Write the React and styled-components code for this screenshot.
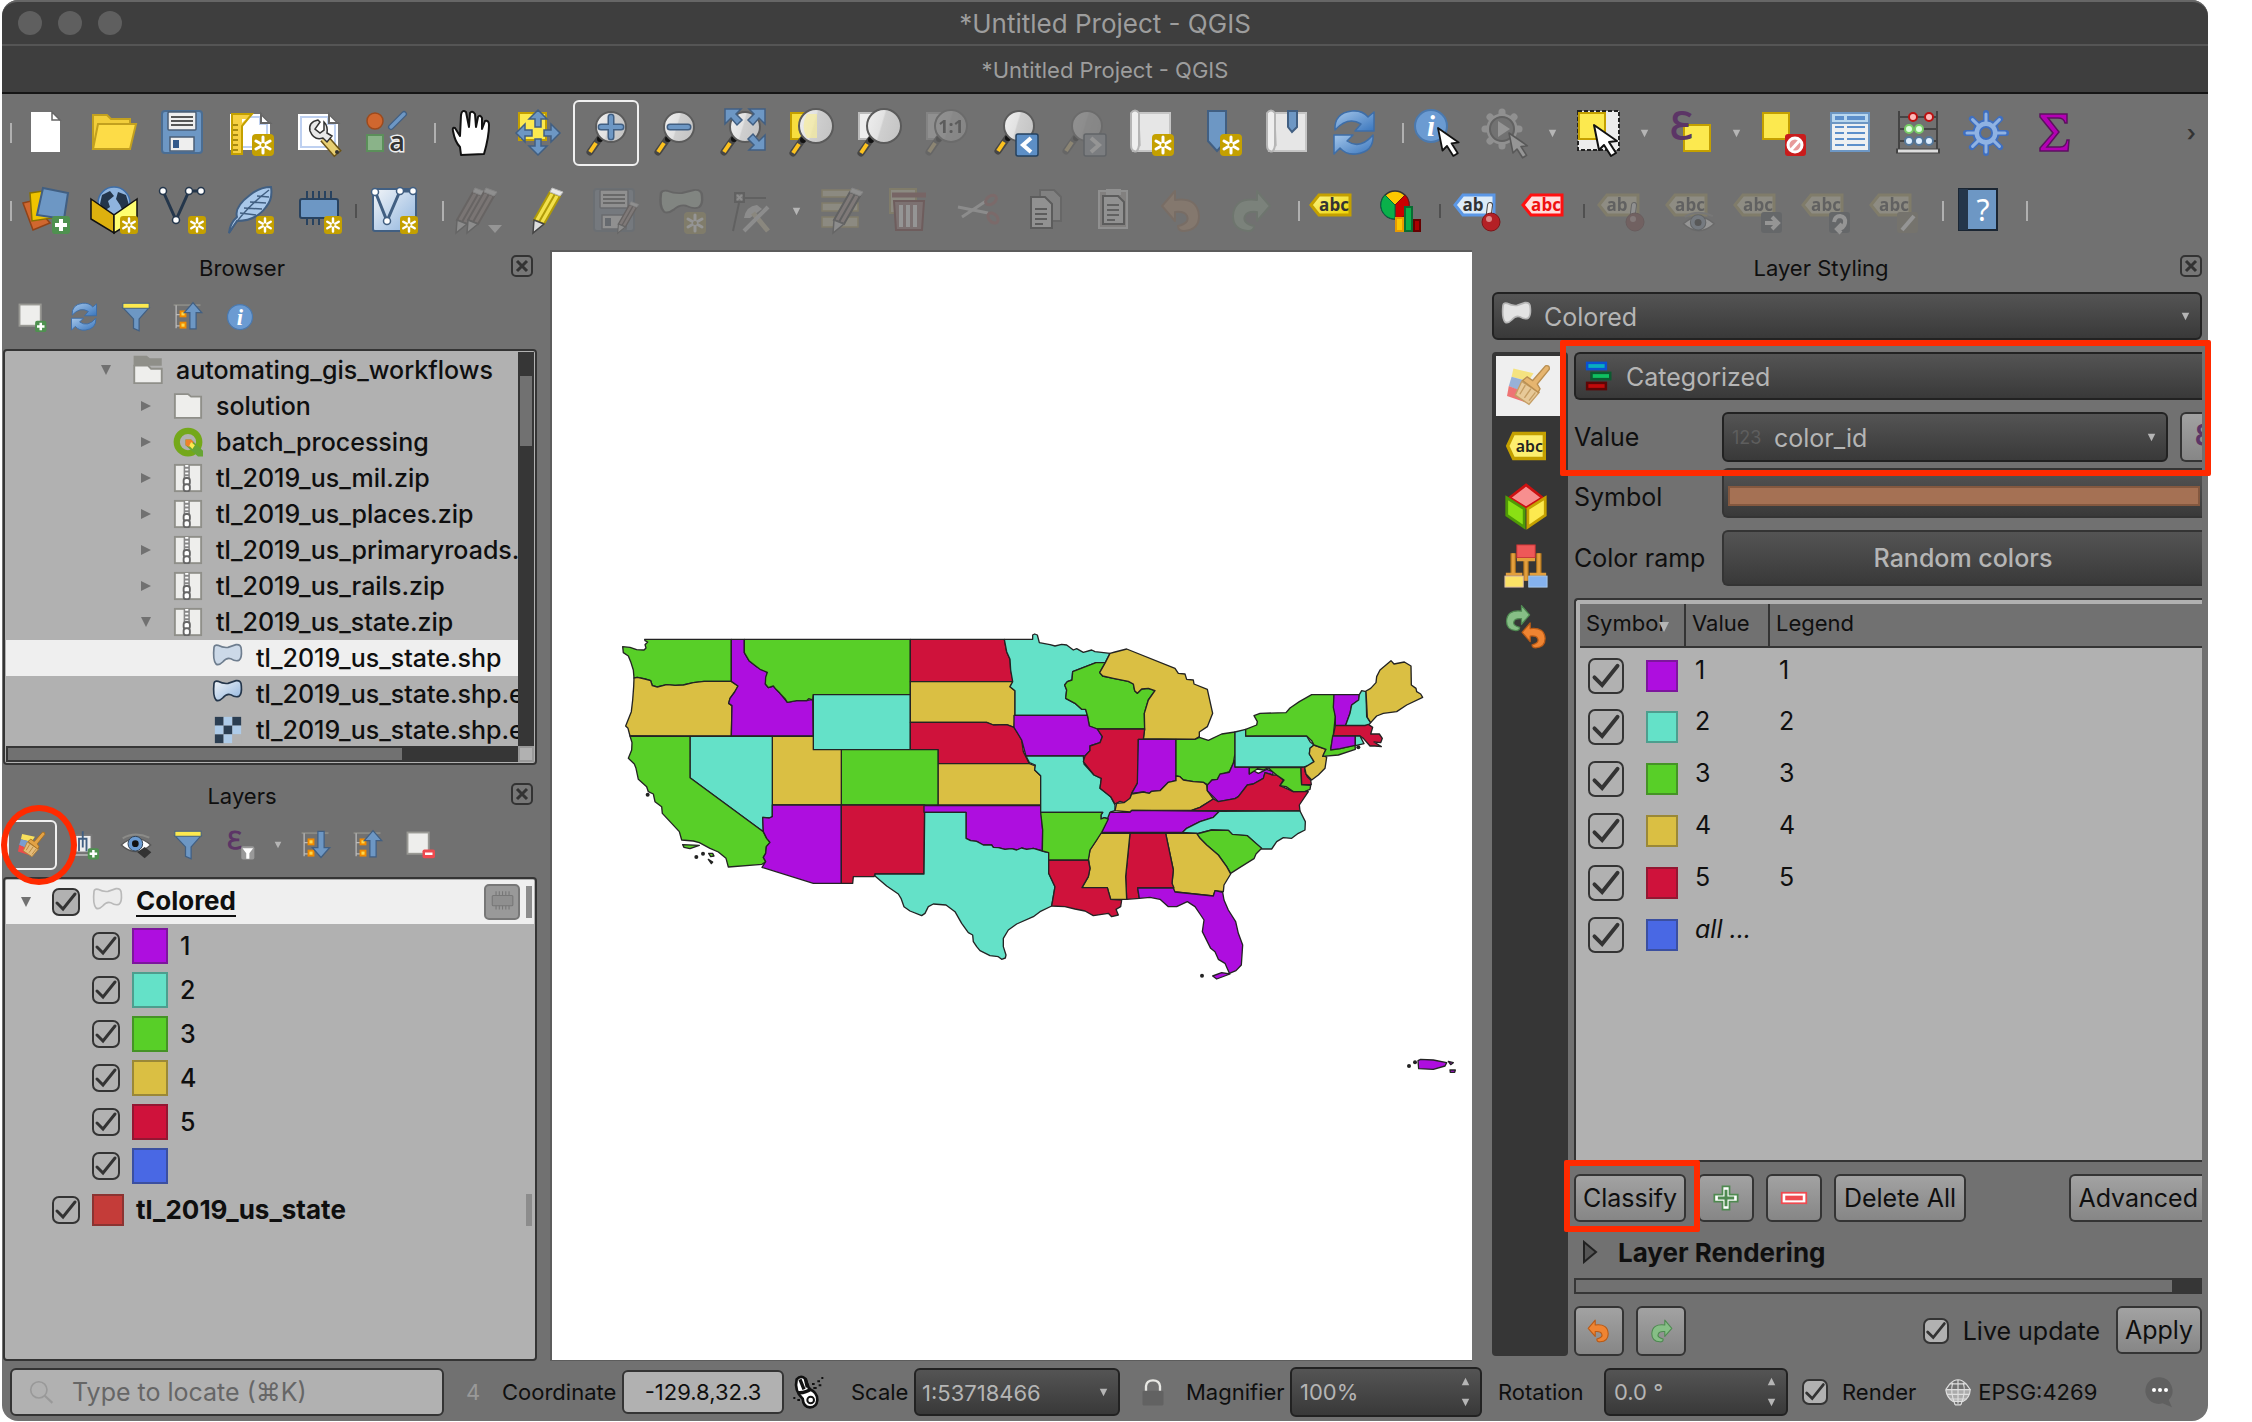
import React from "react";
import styled, { createGlobalStyle, css } from "styled-components";

const Global = createGlobalStyle`
  * { box-sizing: border-box; }
  body { margin: 0; background: #fff; }
  body, button, input, select { font-family: Inter, "Liberation Sans", sans-serif; color: #0f0f0f; }
  button, input, select { margin: 0; padding: 0; font-size: inherit; }
`;

const P = "#ae0edf", T = "#64e1c8", G = "#58cf28", Y = "#dabf43", R = "#cf123b", B = "#4968e4";
const BLUE = "#6d97c4", NAVY = "#415f82", GOLD = "#c4a000", YEL = "#fce94f";

/* ---------- icon parts ---------- */
const Star = ({ x = 26, y = 25, s = 22 }) => (
  <g transform={`translate(${x} ${y}) scale(${s / 22})`}>
    <rect width="22" height="22" rx="4" fill={GOLD} />
    <path d="M11 3V19M4 7L18 15M18 7L4 15" stroke="#fff" strokeWidth="3" strokeLinecap="round" />
    <circle cx="11" cy="11" r="2" fill={GOLD} />
  </g>
);
const Glass = ({ cx = 29, cy = 18, r = 15 }) => (
  <g>
    <path d={`M${cx - r + 4} ${cy + r - 4}L${cx - r - 6} ${cy + r + 10}`} stroke="#464646" strokeWidth="7" strokeLinecap="round" />
    <path d={`M${cx - r} ${cy + r + 1}L${cx - r - 6} ${cy + r + 10}`} stroke="#fcc21f" strokeWidth="4" />
    <circle cx={cx - r + 4} cy={cy + r - 3} r="3" fill="#111" />
    <circle cx={cx} cy={cy} r={r} fill="url(#lens)" stroke="#5b5b5b" strokeWidth="2" />
  </g>
);
const Cursor = ({ x, y, k = 1 }) => (
  <path transform={`translate(${x} ${y}) scale(${k})`} d="M0 0L5 25L10 20L17 31L22 28L15 17L23 16Z" fill="#fff" stroke="#111" strokeWidth="2" strokeLinejoin="round" />
);
const Sheet = () => (
  <g>
    <path d="M4 5H36L44 13V41H4Z" fill="#fff" />
    <path d="M7 8H34V15H41V38H7Z" fill="none" stroke="#bed0f0" strokeWidth="2" />
    <path d="M35 5V14H44Z" fill="#fff" stroke="#666" strokeWidth="2" />
  </g>
);
const Scroll = () => (
  <g>
    <path d="M12 4H44V42H8L14 36Z" fill="#e6e6e6" stroke="#c5c5c5" strokeWidth="2" />
    <path d="M5 4Q9 -1 13 4V36Q12 44 8 42Q5 41 5 36Z" fill="#eee" stroke="#b5b5b5" strokeWidth="2" />
  </g>
);
const Pencil = ({ dx = 0, fill = "#f2e14c", edge = "#b09b08" }) => (
  <g transform={`translate(${dx} 0)`}>
    <path d="M28 5L38 9L22 37L12 33Z" fill={fill} stroke={edge} strokeWidth="2" />
    <path d="M33 7L17 35" stroke={edge} strokeWidth="2" />
    <path d="M28 5L30 1L41 5L38 9Z" fill="#e8e8e8" stroke="#bbb" strokeWidth="1" />
    <path d="M12 33L22 37L11 46Z" fill="#ddd" stroke="#444" strokeWidth="1.5" />
  </g>
);
const Tag = ({ fill = "url(#tagY)", edge = GOLD, ink = "#333", t = "abc" }) => (
  <g>
    <path d="M1 18L9 8H40V28H9Z" fill={fill} stroke={edge} strokeWidth="3" />
    <text x={t === "abc" ? 24 : 19} y="24" fontFamily="Open Sans, sans-serif" fontSize="17" fontWeight="700" fill={ink} textAnchor="middle">{t}</text>
  </g>
);
const Pin = () => (
  <g>
    <path d="M36 18L34 34" stroke="#444" strokeWidth="6" strokeLinecap="round" />
    <path d="M36 18L34 34" stroke="#eee" strokeWidth="4" strokeLinecap="round" />
    <circle cx="37" cy="35" r="9" fill="#b42025" stroke="#7d1518" strokeWidth="1" />
    <circle cx="35" cy="32" r="3" fill="#d88" />
  </g>
);
const Blob = ({ fill = "url(#blobF)", edge = "#24364b" }) => (
  <path d="M3 8Q4 4 9 5Q17 9 24 8Q30 6 36 4Q44 3 44 12Q45 23 41 27Q36 30 28 25Q22 23 16 30Q10 36 6 33Q1 27 3 8Z" fill={fill} stroke={edge} strokeWidth="2.5" />
);
const Undo = ({ fill = "#ef8432", edge = "#b95a16" }) => (
  <path d="M4 19L17 4V13Q40 10 41 29Q41 43 26 44Q20 44 20 39Q32 36 29 29Q27 24 17 25V34Z" fill={fill} stroke={edge} strokeWidth="2" strokeLinejoin="round" />
);
const Redo = () => <g transform="translate(48 0) scale(-1 1)"><Undo fill="#86bf86" edge="#4f8a52" /></g>;
const Eps = ({ x = 18, y = 32, s = 40 }) => (
  <text x={x} y={y} fontFamily="Liberation Serif, serif" fontSize={s} fontWeight="700" fill="#5c3566" textAnchor="middle">ℇ</text>
);
const Brush = () => (
  <g>
    <path d="M7 5L29 10L23 19L5 14Z" fill="#f8e05c" />
    <path d="M5 14L23 19L17 31L2 24Z" fill="#7a9dd0" />
    <path d="M2 24L17 30L21 42L0 35Z" fill="#ee4b4b" />
    <path d="M16 19L35 31L24 44L9 34Z" fill="#e5bd7c" stroke="#b78336" strokeWidth="1.5" />
    <path d="M14 33L20 23M19 37L26 27M24 40L31 31" stroke="#b78336" strokeWidth="1.5" />
    <path d="M17 18L22 14L28 18L42 2Q47 1 46 6L33 22L36 27L34 31Z" fill="#e3a245" stroke="#a86f1d" strokeWidth="1.5" />
  </g>
);
const TreeIcon = ({ up }) => (
  <g>
    <path d="M1 5H44" stroke="#8a8a85" strokeWidth="3" />
    <path d="M5 5V42M5 20H14M5 38H14" stroke="#bbb" strokeWidth="2" />
    <rect x="12" y="15" width="8" height="8" fill="#fcd94e" stroke="#f08a00" strokeWidth="3" />
    <rect x="12" y="33" width="8" height="8" fill="#fcd94e" stroke="#f08a00" strokeWidth="3" />
    <path d={up ? "M32 1L46 17H37V43H27V17H18Z" : "M32 44L46 28H37V2H27V28H18Z"} fill={BLUE} stroke={NAVY} strokeWidth="2" />
  </g>
);
const Funnel = () => (
  <g>
    <path d="M3 9L20 27V42L29 46V27L45 9Z" fill={BLUE} stroke={NAVY} strokeWidth="2" />
    <rect x="3" y="2" width="42" height="8" fill={YEL} stroke={NAVY} strokeWidth="1.5" />
  </g>
);
const Refresh = () => (
  <g fill="url(#swirl)" stroke="#3e6ea8" strokeWidth="1.5" strokeLinejoin="round">
    <path d="M5 21Q4 4 22 2Q32 1 38 8L44 3V22H25L31 15Q18 7 5 21Z" />
    <path d="M43 26Q44 43 26 45Q16 46 10 39L4 45V26H23L17 32Q30 41 43 26Z" />
  </g>
);
const Info = ({ cx = 24, cy = 24, r = 20 }) => (
  <g>
    <circle cx={cx} cy={cy} r={r} fill="#6b9bd2" stroke="#4b79ae" strokeWidth="2" />
    <text x={cx} y={cy + r * 0.6} fontFamily="Liberation Serif, serif" fontStyle="italic" fontWeight="700" fontSize={r * 1.8} fill="#fff" textAnchor="middle">i</text>
  </g>
);
const Gear = ({ n, ri, ro, fill, stroke, w, cx = 24, cy = 24 }) => (
  <g>
    {Array.from({ length: n }, (_, i) => {
      const a = (i * 2 * Math.PI) / n;
      return <line key={i} x1={cx + ri * Math.cos(a)} y1={cy + ri * Math.sin(a)} x2={cx + ro * Math.cos(a)} y2={cy + ro * Math.sin(a)} stroke={stroke} strokeWidth={w} strokeLinecap="round" />;
    })}
    <circle cx={cx} cy={cy} r={ri} fill={fill} stroke={stroke} strokeWidth="3" />
  </g>
);
const Chip = ({ fill = BLUE, edge = "#28425f" }) => (
  <g>
    <path d="M13 4V12M19 4V12M25 4V12M31 4V12M37 4V12M13 30V38M19 30V38M25 30V38M31 30V38M37 30V38" stroke={edge} strokeWidth="2" />
    <rect x="6" y="12" width="38" height="19" rx="2" fill={fill} stroke={edge} strokeWidth="2" />
  </g>
);
const PlusBadge = ({ x = 30, y = 29, s = 18 }) => (
  <g transform={`translate(${x} ${y}) scale(${s / 18})`}>
    <rect width="18" height="18" rx="3" fill="#4f9150" />
    <path d="M9 3V15M3 9H15" stroke="#fff" strokeWidth="4" />
  </g>
);
const Eye = () => (
  <g>
    <path d="M2 24Q24 4 46 24Q24 44 2 24Z" fill="#fff" stroke="#555" strokeWidth="2" />
    <circle cx="23" cy="22" r="11" fill="#6b9bd2" stroke="#345" strokeWidth="1.5" />
    <circle cx="23" cy="22" r="5" fill="#111" />
    <path d="M4 14Q22 3 44 13" stroke="#8b8b88" strokeWidth="3" fill="none" />
  </g>
);
const Floppy = () => (
  <g>
    <rect x="4" y="2" width="40" height="42" rx="3" fill={BLUE} stroke="#4a6d93" strokeWidth="2" />
    <rect x="10" y="3" width="28" height="18" rx="1" fill="#eee" stroke="#4a5e75" strokeWidth="1.5" />
    <path d="M13 8H35M13 12H35M13 16H35" stroke="#555" strokeWidth="2" />
    <rect x="12" y="28" width="24" height="14" fill="#eee" stroke="#4a5e75" strokeWidth="1.5" />
    <rect x="15" y="31" width="6" height="8" fill="#345a8a" />
  </g>
);
const SmallBadge = ({ d, pen }) => (
  <g>
    <rect x="27" y="25" width="21" height="21" rx="3" fill={pen ? "#8a7b45" : "#3c4d5e"} />
    <path d={d} stroke="#fff" strokeWidth="4" fill="none" />
  </g>
);

const ICONS = {
  new: <g><path d="M9 3H30L38 12V43H9Z" fill="#fff" /><path d="M30 3V11H38Z" fill="#fff" stroke="#666" strokeWidth="1.5" /></g>,
  open: <g stroke="#c2a01f" strokeWidth="2"><path d="M3 6H17L21 10H40V40H3Z" fill="#f2ce3b" /><path d="M8 15H46L40 40H3Z" fill="#fddc47" /></g>,
  save: <Floppy />,
  newLayout: <g><Sheet /><path d="M6 5H26L16 17V45H6Z" fill="#f6d042" stroke={GOLD} strokeWidth="2" /><path d="M7 16H12M7 21H12M7 26H12M7 31H12M7 36H12M7 41H12" stroke="#8d7300" strokeWidth="1.5" /><path d="M16 10H20L16 14Z" fill="#fff" /><Star /></g>,
  layouts: <g><Sheet /><path d="M30 29L44 45" stroke="#6b5316" strokeWidth="10" /><path d="M30 29L43 44" stroke="#e8cf72" strokeWidth="7" /><path d="M24 11Q14 13 16 22Q20 32 29 29L33 33L38 27L33 24Q34 17 30 13V21L26 24L21 20L26 13Z" fill="#e8e8e8" stroke="#333" strokeWidth="1.5" /><circle cx="43" cy="43" r="2" fill="#333" /></g>,
  styles: <g><circle cx="13" cy="12" r="8" fill="#d0672f" stroke="#9c4a1d" strokeWidth="1.5" /><path d="M29 18L42 5" stroke={NAVY} strokeWidth="6" strokeLinecap="round" /><path d="M29 18L42 5" stroke={BLUE} strokeWidth="3.5" strokeLinecap="round" /><rect x="5" y="26" width="16" height="16" fill="#8ab389" stroke="#5b8f5a" strokeWidth="2" /><text x="35" y="42" fontFamily="Open Sans, sans-serif" fontSize="27" fontWeight="600" textAnchor="middle" fill="#333" stroke="#eee" strokeWidth="3" paintOrder="stroke">a</text></g>,
  hand: <g><path d="M14 46L13 38Q8 33 6 22Q5 18 8 19L13 27L14 6Q15 0 19 3L22 18L23 4Q25 1 28 5L29 18L31 8Q33 5 35 9L35 20L38 12Q42 11 42 16Q42 28 37 45Z" transform="translate(1 0)" fill="#fff" stroke="#111" strokeWidth="2" strokeLinejoin="round" /></g>,
  pan: <g><rect x="5" y="4" width="27" height="27" fill={YEL} stroke={GOLD} strokeWidth="2" /><path d="M24 1L33 10H27V18H21V10H15ZM24 46L33 37H27V30H21V37H15ZM2 24L11 15V21H18V27H11V33ZM46 24L37 15V21H30V27H37V33Z" fill={BLUE} stroke={NAVY} strokeWidth="1.5" /></g>,
  zoomIn: <g><Glass /><path d="M29 8V28M19 18H39" stroke={NAVY} strokeWidth="7" strokeLinecap="round" /><path d="M29 8V28M19 18H39" stroke={BLUE} strokeWidth="4" strokeLinecap="round" /></g>,
  zoomOut: <g><Glass /><path d="M20 18H38" stroke={NAVY} strokeWidth="7" strokeLinecap="round" /><path d="M20 18H38" stroke={BLUE} strokeWidth="4" strokeLinecap="round" /></g>,
  zoomFull: <g><Glass cx={27} cy={18} /><path d="M7 0H23L18 5L24 11L19 16L13 9L7 15ZM47 0H31L36 5L30 11L35 16L41 9L47 15ZM47 41H31L36 36L30 30L35 25L41 32L47 26Z" fill={BLUE} stroke={NAVY} strokeWidth="1.5" /></g>,
  zoomSel: <g><rect x="5" y="4" width="26" height="26" fill="#f8de3d" stroke={GOLD} strokeWidth="2" /><Glass cx={30} cy={17} r={17} /><path d="M21 5H31V29H21Q14 17 21 5" fill="#f7ec9d" opacity=".7" /></g>,
  zoomLayer: <g><rect x="5" y="4" width="26" height="26" fill="#eee" stroke="#bbb" strokeWidth="2" /><Glass cx={30} cy={17} r={17} /></g>,
  zoomNative: <g><rect x="5" y="4" width="26" height="26" fill="#eee" stroke="#bbb" strokeWidth="2" /><Glass cx={29} cy={17} r={16} /><text x="29" y="24" fontFamily="Open Sans, sans-serif" fontSize="18" fontWeight="700" textAnchor="middle" fill="#222">1:1</text></g>,
  zoomLast: <g><Glass cy={17} /><rect x="26" y="25" width="22" height="22" rx="2" fill="#5d8fc6" stroke="#25415f" strokeWidth="1.5" /><path d="M41 29L33 36L41 43" stroke="#fff" strokeWidth="4" fill="none" /></g>,
  zoomNext: <g><Glass cy={17} /><rect x="26" y="25" width="22" height="22" rx="2" fill="#8fa6bf" stroke="#25415f" strokeWidth="1.5" /><path d="M33 29L41 36L33 43" stroke="#fff" strokeWidth="4" fill="none" /></g>,
  mapView: <g><Scroll /><Star /></g>,
  newBookmark: <g><path d="M14 2H32V32L23 42L14 32Z" fill={BLUE} stroke={NAVY} strokeWidth="2" /><Star /></g>,
  bookmarks: <g><Scroll /><path d="M26 2H35V18L30 23L26 18Z" fill={BLUE} stroke={NAVY} strokeWidth="2" /></g>,
  refresh: <Refresh />,
  identify: <g><Info cx={17} cy={17} r={16} /><Cursor x={24} y={19} k={0.9} /></g>,
  action: <g><Gear n={8} cx={20} cy={20} ri={14} ro={17} fill="#888" stroke="#eee" w={7} /><circle cx="20" cy="20" r="12" fill="#777" stroke="#333" strokeWidth="2" /><path d="M16 12L28 20L16 28Z" fill="#fff" /><Cursor x={27} y={24} k={0.8} /></g>,
  select: <g><rect x="4" y="2" width="41" height="39" fill="#ececec" stroke="#222" strokeWidth="2" strokeDasharray="4 2" /><rect x="5" y="4" width="26" height="26" fill={YEL} stroke={GOLD} strokeWidth="2" /><Cursor x={20} y={16} /></g>,
  selectExpr: <g><rect x="18" y="16" width="26" height="26" fill={YEL} stroke={GOLD} strokeWidth="2" /><Eps x={15} y={30} s={38} /></g>,
  deselect: <g><rect x="5" y="4" width="26" height="26" fill={YEL} stroke={GOLD} strokeWidth="2" /><rect x="27" y="25" width="21" height="22" rx="3" fill="#c91c1c" /><circle cx="37" cy="36" r="7" fill="#e79a9a" stroke="#fff" strokeWidth="3" /><path d="M33 41L42 31" stroke="#fff" strokeWidth="3" /></g>,
  table: <g><rect x="5" y="4" width="38" height="38" fill="#eef0f2" stroke={BLUE} strokeWidth="2" /><rect x="6" y="5" width="36" height="9" fill="#b9d7ef" /><path d="M9 9H18M21 9H39" stroke="#5c8fcb" strokeWidth="4" /><path d="M6 14H42" stroke={BLUE} strokeWidth="2" /><path d="M9 18H18M21 18H39M9 24H18M21 24H39M9 30H18M21 30H39M9 36H18M21 36H39" stroke="#5c8fcb" strokeWidth="2" /></g>,
  abacus: <g><path d="M5 2V40M43 2V40M5 8H43M5 20H43M5 32H43" stroke="#444" strokeWidth="2" /><path d="M2 42H46" stroke="#444" strokeWidth="5" /><path d="M4 42H44" stroke="#ddd" strokeWidth="3" />{[[19, 8], [35, 8]].map(([x, y]) => <circle key={x} cx={x} cy={y} r="4" fill="#fbb" stroke="#b11" strokeWidth="2" />)}{[15, 25].map((x) => <circle key={x} cx={x} cy="20" r="4" fill="#dfd" stroke="#7c6" strokeWidth="2" />)}{[15, 25, 35].map((x) => <circle key={x} cx={x} cy="32" r="4" fill="#def" stroke="#579" strokeWidth="2" />)}</g>,
  toolbox: <g><Gear n={8} ri={12} ro={20} fill="#8fb2e3" stroke="#3f6fc0" w={6} /><Gear n={8} ri={10} ro={19} fill="#8fb2e3" stroke="#8fb2e3" w={3} /><circle cx="24" cy="24" r="6" fill="#717171" stroke="#3f6fc0" strokeWidth="2" /></g>,
  sigma: <path d="M10 5H37V14H35Q34 9 28 9H18L29 23L17 38H30Q36 38 37 31H39L38 42H10V39L23 24L10 8Z" fill="#b400b4" stroke="#5c1060" strokeWidth="1.5" />,
  dataSource: <g><path d="M1 16L9 14L28 36L11 43Z" fill="#d0672f" stroke="#8f4319" strokeWidth="1.5" /><path d="M8 6L21 4L30 31L10 34Z" fill="#efc400" stroke="#8a7200" strokeWidth="1.5" /><path d="M21 1L46 6L42 32L15 28Z" fill={BLUE} stroke={NAVY} strokeWidth="2" /><PlusBadge /></g>,
  geopackage: <g><circle cx="24" cy="16" r="16" fill="#8fb4de" stroke="#3e6ea8" strokeWidth="1.5" /><path d="M12 8L20 4L24 9L18 14L20 20L14 24L10 17ZM28 5L36 8L39 18L34 27L30 18L26 12Z" fill="#24364b" /><path d="M1 12L24 28V46L1 32Z" fill="#ddb10e" stroke="#111" strokeWidth="1.5" /><path d="M47 12L24 28V46L47 32Z" fill="#ffff70" stroke="#111" strokeWidth="1.5" /><Star x={30} y={29} s={18} /></g>,
  shapefile: <g><path d="M5 4L18 33L31 4H43" stroke="#24364b" strokeWidth="3" fill="none" />{[[5, 4], [18, 33], [31, 4], [43, 4]].map(([x, y]) => <circle key={x} cx={x} cy={y} r="3.5" fill="#fff" stroke="#24364b" strokeWidth="1.5" />)}<Star x={30} y={29} s={18} /></g>,
  spatialite: <g><path d="M3 46Q4 36 11 30Q8 20 24 8Q34 0 45 0Q47 12 40 20Q30 34 11 34Z" fill="#a9c8ea" stroke={NAVY} strokeWidth="2" /><path d="M3 46Q18 22 43 3M14 26L30 28M18 21L36 22M24 15L40 16M31 9L43 10" stroke={NAVY} strokeWidth="1.5" fill="none" /><Star x={30} y={29} s={18} /></g>,
  memory: <g><Chip /><Star x={30} y={29} s={18} /></g>,
  virtual: <g><rect x="3" y="2" width="43" height="42" rx="2" fill="url(#blobF)" stroke={NAVY} strokeWidth="2" /><path d="M5 4L17 34L30 4H45" stroke={NAVY} strokeWidth="3" fill="none" />{[[5, 5], [17, 34], [30, 4], [43, 4]].map(([x, y]) => <circle key={x} cx={x} cy={y} r="3.5" fill="#fff" stroke={NAVY} strokeWidth="1.5" />)}<Star x={30} y={29} s={18} /></g>,
  edits: <g><Pencil dx={-9} fill="#a67f74" edge="#5a3a34" /><Pencil dx={2} fill="#a67f74" edge="#5a3a34" /><path d="M34 38H48L41 46Z" fill="#fff" /></g>,
  pencil: <Pencil />,
  saveEdits: <g><Floppy /><g transform="translate(20 14) scale(.7)"><Pencil fill="#c08f86" edge="#5a3a34" /></g></g>,
  addPoly: <g><g transform="scale(1 .75)"><Blob fill="#a9c4a6" edge="#444" /></g><Star /></g>,
  vertex: <g><rect x="9" y="6" width="9" height="9" fill="none" stroke="#333" strokeWidth="2" /><path d="M11 8L16 13M16 8L11 13" stroke="#ddd" strokeWidth="2" /><path d="M18 11H40M13 16L7 44" stroke="#333" strokeWidth="2" /><path d="M18 31Q20 19 31 18L36 22L24 31Z" fill="#ddd" /><path d="M27 26L42 44" stroke="#e6c978" strokeWidth="5" /><path d="M42 20L18 44" stroke="#ddd" strokeWidth="4" /></g>,
  modify: <g><path d="M4 3H40V10H4ZM4 16H40V24H4ZM4 30H40V40H4Z" fill="#ead586" stroke={GOLD} strokeWidth="1.5" /><Pencil dx={4} fill="#c08f86" edge="#333" /></g>,
  trash: <g><rect x="4" y="2" width="26" height="24" fill="#ead586" stroke={GOLD} strokeWidth="2" /><path d="M8 14H38L36 43H10Z" fill="#c66" stroke="#a11" strokeWidth="2" /><path d="M15 18V40M22 18V40M29 18V40" stroke="#fff" strokeWidth="4" /><path d="M6 8H40" stroke="#c33" strokeWidth="5" /></g>,
  cut: <g><path d="M4 20L34 26M8 30L32 14" stroke="#ddd" strokeWidth="3" /><ellipse cx="37" cy="13" rx="6" ry="4" fill="none" stroke="#d44" strokeWidth="3" transform="rotate(-35 37 13)" /><ellipse cx="39" cy="31" rx="6" ry="4" fill="none" stroke="#d44" strokeWidth="3" transform="rotate(45 39 31)" /></g>,
  copy: <g stroke="#222" strokeWidth="2" fill="#f2f2f2"><path d="M18 3H32L39 10V34H18Z" opacity=".5" /><path d="M9 10H23L30 17V41H9Z" /><path d="M13 22H25M13 27H25M13 32H25M13 37H21" /></g>,
  paste: <g strokeWidth="2"><rect x="9" y="4" width="28" height="37" fill="#b9b0a0" stroke="#eee" /><path d="M13 9H28L34 15V37H13Z" fill="#f2f2f2" stroke="#222" /><rect x="16" y="2" width="15" height="6" fill="#eee" /><path d="M17 18H29M17 23H29M17 28H29M17 33H25" stroke="#333" /></g>,
  undo: <Undo />,
  redo: <Redo />,
  label: <Tag />,
  diagram: <g><circle cx="17" cy="18" r="14" fill="#fcc800" stroke="#333" strokeWidth="1.5" /><path d="M17 18L27 8A14 14 0 0 1 17 32Z" fill="#c00" stroke="#711" /><path d="M17 18V32A14 14 0 0 1 7 8Z" fill="#0ab04a" stroke="#064" /><rect x="18" y="31" width="7" height="13" fill="#fcc800" stroke="#e69a00" strokeWidth="2" /><rect x="27" y="20" width="7" height="24" fill="#0ab04a" stroke="#0a6b32" strokeWidth="2" /><rect x="36" y="33" width="6" height="11" fill="#a00" stroke="#600" strokeWidth="2" /></g>,
  labelPin: <g><Tag t="ab" fill="#dcebf8" edge="#5b97e6" /><Pin /></g>,
  labelRed: <Tag fill="#fdd" edge="#ff1010" ink="#ee1010" />,
  lPin: <g><Tag t="ab" fill="#f0e08a" /><Pin /></g>,
  lEye: <g><Tag fill="#f0e08a" /><g transform="translate(16 20) scale(.7)"><Eye /></g></g>,
  lMove: <g><Tag fill="#f0e08a" /><SmallBadge d="M31 36H43M38 30L44 36L38 42" /></g>,
  lRotate: <g><Tag fill="#f0e08a" /><SmallBadge d="M32 35Q33 29 38 29Q44 30 43 36Q42 41 36 42M40 37L35 42L39 46" /></g>,
  lEdit: <g><Tag fill="#f0e08a" /><SmallBadge pen d="M32 43L44 29" /></g>,
  help: <g><rect x="5" y="2" width="38" height="41" fill={BLUE} stroke="#1b2633" strokeWidth="2" /><rect x="5" y="2" width="9" height="41" fill="#24364b" /><text x="29" y="34" fontFamily="Noto Sans, sans-serif" fontSize="30" textAnchor="middle" fill="#fff">?</text></g>,
  addLayer: <g><rect x="4" y="4" width="34" height="34" fill="#eeeeec" stroke="#999994" strokeWidth="3" /><PlusBadge x={29} y={30} s={18} /></g>,
  removeLayer: <g><rect x="4" y="4" width="34" height="34" fill="#eeeeec" stroke="#999994" strokeWidth="3" /><g transform="translate(28 31)"><rect width="20" height="14" rx="3" fill="#ef4a50" /><path d="M4 7H16" stroke="#fff" strokeWidth="4" /></g></g>,
  filter: <Funnel />,
  collapse: <TreeIcon up />,
  expand: <TreeIcon />,
  info: <Info />,
  brush: <Brush />,
  brushFaded: <g opacity=".75"><Brush /></g>,
  addGroup: <g><path d="M8 4V40H34" stroke="#aaa" strokeWidth="3" fill="none" /><rect x="10" y="8" width="26" height="28" fill="#eee" stroke="#777" strokeWidth="3" /><path d="M16 34V14H28V34M22 2V28" stroke={NAVY} strokeWidth="3" fill="none" /><PlusBadge /></g>,
  eye: <g><Eye /><path d="M26 35L37 27L47 35L37 44Z" fill="#333" /></g>,
  filterExpr: <g><Eps x={15} y={30} s={40} /><rect x="26" y="26" width="21" height="21" rx="3" fill="#999" /><path d="M28 29H45L39 37V46H34V37Z" fill="#fff" /></g>,
  tagYellow: <g><path d="M2 24L9 9H46V39H9Z" fill="#fdef6f" stroke={GOLD} strokeWidth="4" /><text x="28" y="31" fontFamily="Noto Sans, sans-serif" fontSize="19" fontWeight="600" textAnchor="middle" fill="#222">abc</text></g>,
  cube: <g><path d="M24 1L42 15L24 26L6 15Z" fill="#f78f8f" stroke="#c11" strokeWidth="3" /><path d="M3 15L22 27V47L3 34Z" fill="#8ae014" stroke="#4e9a06" strokeWidth="3" /><path d="M45 15L26 27V47L45 34Z" fill={YEL} stroke={GOLD} strokeWidth="3" /></g>,
  brushes: <g><rect x="14" y="1" width="20" height="14" fill="#ee5858" stroke="#c33" /><path d="M10 10V34M38 10V34M24 16V40" stroke="#a86f1d" strokeWidth="6" /><path d="M10 10V34M38 10V34M24 16V40M14 17H34M2 33H20M28 33H46" stroke="#e39f3c" strokeWidth="3.5" /><rect x="1" y="35" width="20" height="12" fill="#fbe266" stroke="#dba" /><rect x="27" y="35" width="20" height="12" fill="#85b2ee" stroke="#ace" /></g>,
  history: <g><g transform="translate(-2 -1) scale(.68)"><g transform="translate(48 0) scale(-1 1)"><Undo fill="#86bf86" edge="#4f8a52" /></g></g><g transform="translate(17 18) scale(.68)"><Undo /></g></g>,
  blob: <Blob />,
  blobLight: <Blob fill="#ccd9e8" edge="#6e7d8e" />,
  blobGray: <Blob fill="#ececec" edge="#b9b9b9" />,
  blobWhite: <Blob fill="#e4e4e4" edge="#b5b5b5" />,
  folder: <path d="M3 5H24L29 9H45V43H3Z" fill="#eeeeec" stroke="#8f8f89" strokeWidth="3" />,
  folderOpen: <g><path d="M1 1H22L27 5H46V17H1Z" fill="#8f8f89" /><path d="M2 17H24L29 22H46V45H2Z" fill="#eeeeec" stroke="#8f8f89" strokeWidth="3" /></g>,
  qgis: <g><circle cx="24" cy="24" r="18" fill="none" stroke="#74a81a" strokeWidth="10" /><path d="M20 20H29L48 38V47H40L20 29Z" fill="#67a534" /><path d="M20 20H29L33 24L26 32L20 29Z" fill="#f0812a" /><path d="M29 24L35 29L31 35L26 30Z" fill="#fce94f" /></g>,
  zip: <g><rect x="3" y="3" width="42" height="42" fill="#eeeeec" stroke="#8f8f89" strokeWidth="3" /><path d="M22 3V24" stroke="#888" strokeWidth="10" /><path d="M22 3V24" stroke="#fff" strokeWidth="5" strokeDasharray="3 3" /><rect x="17" y="24" width="10" height="11" rx="4" fill="#fff" stroke="#666" strokeWidth="3" /><rect x="17" y="34" width="10" height="11" rx="4" fill="#fff" stroke="#666" strokeWidth="3" /></g>,
  raster: <g>{["#2b3e52", "#aecbe8", "#2b3e52", "#aecbe8", "#2b3e52", "#aecbe8", "#2b3e52", "#aecbe8", "#b1b1b1"].map((c, i) => <rect key={i} x={3 + (i % 3) * 14} y={3 + Math.floor(i / 3) * 14} width="14" height="14" fill={c} />)}</g>,
  categorized: <g strokeWidth="4"><rect x="5" y="3" width="30" height="10" fill="#09aebf" stroke="#0a50d0" /><rect x="12" y="19" width="30" height="10" fill="#10c060" stroke="#0c5a30" /><rect x="5" y="35" width="30" height="10" fill="#c00a0a" stroke="#5e0606" /></g>,
  chip: <Chip fill="#8f8f8f" edge="#777" />,
  plus: <g><path d="M18 4H30V18H44V30H30V44H18V30H4V18H18Z" fill="#fff" stroke="#4f8a50" strokeWidth="3" /><path d="M24 10V38M10 24H38" stroke="#4f8a50" strokeWidth="5" /></g>,
  minus: <g><rect x="3" y="15" width="42" height="18" fill="#fff" stroke="#ef4a50" strokeWidth="3" /><rect x="9" y="20" width="30" height="8" fill="#ef4a50" /></g>,
  search: <g fill="none" stroke="#999" strokeWidth="3"><circle cx="20" cy="20" r="15" /><path d="M31 31L45 44" strokeWidth="4" /></g>,
  mouse: <g><path d="M7 5Q13 -2 20 4L26 20Q38 24 38 36Q37 47 27 47Q17 47 16 34Q3 22 7 5Z" fill="#fff" stroke="#111" strokeWidth="4" /><path d="M12 5L18 20M20 4L23 17M9 25Q20 26 29 19" stroke="#111" strokeWidth="5" /><circle cx="28" cy="36" r="5" fill="#fff" stroke="#111" strokeWidth="3" /><path d="M30 12H34M38 8H42M44 3H47M32 18H37M40 14H44M2 33H5M8 36H12" stroke="#111" strokeWidth="3" /></g>,
  lock: <g><path d="M12 24V14Q13 4 24 4Q35 4 36 14V24" fill="none" stroke="#e8e8e4" strokeWidth="4" /><rect x="6" y="22" width="36" height="25" rx="2" fill="#626262" /></g>,
  globe: <g fill="none" stroke="#dedede" strokeWidth="2"><path d="M3 20H45Q44 34 33 40H15Q5 34 3 20" fill="#aaa" /><path d="M10 10Q24 -4 38 10L45 20M10 10L3 20M10 10H38M5 28H43M10 36H38M24 3V44M15 8Q10 24 19 46M33 8Q38 24 29 46M19 46H29" /></g>,
  bubble: <g><path d="M24 2A20 20 0 1 0 28 41L42 47L37 36A20 20 0 0 0 24 2Z" fill="#606060" /><circle cx="15" cy="21" r="3" fill="#fff" /><circle cx="24" cy="21" r="3" fill="#fff" /><circle cx="33" cy="21" r="3" fill="#fff" /></g>,
  eps: <Eps x={24} y={36} s={46} />,
};

const IconSvg = styled.svg`
  display: block;
  flex: none;
  width: ${(p) => p.$size}px;
  height: ${(p) => p.$size}px;
  overflow: visible;
  ${(p) => p.$dim && css`opacity: 0.25; filter: saturate(0.45);`}
`;
const Icon = ({ name, size = 48, dim }) => (
  <IconSvg viewBox="0 0 48 48" $size={size} $dim={dim} fill="none" aria-hidden="true">{ICONS[name]}</IconSvg>
);

const CaretSvg = styled.svg`
  display: block;
  flex: none;
  width: ${(p) => p.$size}px;
  height: ${(p) => p.$size}px;
  pointer-events: none;
`;
const Caret = ({ size = 12, dir = "down", color = "#b5b5b5" }) => {
  const d = { down: "M1 1H11L6 11Z", up: "M1 11H11L6 1Z", right: "M1 1V11L11 6Z" }[dir];
  return <CaretSvg viewBox="0 0 12 12" $size={size} aria-hidden="true"><path d={d} fill={color} /></CaretSvg>;
};

/* ---------- frame ---------- */
const Page = styled.div`
  min-height: 100vh;
  padding: 0 44px 1px 2px;
  display: flex;
`;
const Window = styled.div`
  flex: 1;
  min-width: 0;
  display: flex;
  flex-direction: column;
  background: #717171;
  border-radius: 16px;
`;
const TitleBar = styled.header`
  height: 46px;
  display: grid;
  grid-template-columns: 1fr auto 1fr;
  align-items: center;
  padding: 0 16px;
  background: #3e3e3e;
  border-top: 2px solid #666;
  border-bottom: 2px solid #555;
  border-radius: 16px 16px 0 0;
  color: #9d9d9d;
  font-size: 26px;
`;
const Lights = styled.div`
  display: flex;
  gap: 16px;
`;
const Light = styled.button`
  width: 24px;
  height: 24px;
  border: 0;
  border-radius: 50%;
  background: #5f5f5f;
`;
const SubTitle = styled.div`
  height: 48px;
  display: flex;
  align-items: center;
  justify-content: center;
  padding-top: 2px;
  background: #3e3e3e;
  border-bottom: 2px solid #151515;
  color: #9d9d9d;
  font-size: 22px;
`;
const Toolbar = styled.div`
  height: 78px;
  display: flex;
  align-items: center;
`;
const Tool = styled.button`
  width: 66px;
  height: 66px;
  margin: 0 1px;
  flex: none;
  display: grid;
  place-items: center;
  background: none;
  border: 2px solid ${(p) => (p.$on ? "#f0f0f0" : "transparent")};
  border-radius: 6px;
`;
const Grip = styled.span`
  flex: none;
  width: ${(p) => (p.$first ? 10 : 16)}px;
  height: 20px;
  border-right: 2px solid #b0b0b0;
`;
const Sep = styled.span`
  flex: none;
  width: 2px;
  height: 14px;
  margin: 0 3px;
  background: #505050;
`;
const DropButton = styled.button`
  flex: none;
  width: 24px;
  height: 48px;
  display: grid;
  place-items: center;
  background: none;
  border: 0;
`;
const More = styled.button`
  margin-left: auto;
  margin-right: 12px;
  border: 0;
  background: none;
  color: #333;
  font-size: 22px;
  font-weight: 600;
`;

const renderTools = (items) =>
  items.map((it, i) => {
    if (it === "|") return <Grip key={i} $first={i === 0} />;
    if (it === "!") return <Sep key={i} />;
    if (it === "v") return <DropButton key={i} aria-label="Options"><Caret size={9} /></DropButton>;
    const dim = it[0] === "-";
    const on = it[0] === "*";
    const name = dim || on ? it.slice(1) : it;
    return <Tool key={i} aria-label={name} $on={on} disabled={dim}><Icon name={name} dim={dim} /></Tool>;
  });

const ROW1 = ["|", "new", "open", "save", "newLayout", "layouts", "styles", "|", "hand", "pan", "*zoomIn", "zoomOut", "zoomFull", "zoomSel", "zoomLayer", "-zoomNative", "zoomLast", "-zoomNext", "mapView", "newBookmark", "bookmarks", "refresh", "|", "identify", "-action", "v", "select", "v", "selectExpr", "v", "deselect", "table", "abacus", "toolbox", "sigma"];
const ROW2 = ["|", "dataSource", "geopackage", "shapefile", "spatialite", "memory", "!", "virtual", "|", "-edits", "pencil", "-saveEdits", "-addPoly", "-vertex", "v", "-modify", "-trash", "-cut", "-copy", "-paste", "-undo", "-redo", "|", "label", "diagram", "!", "labelPin", "labelRed", "!", "-lPin", "-lEye", "-lMove", "-lRotate", "-lEdit", "|", "help", "|"];

const Main = styled.main`
  flex: 1;
  min-height: 0;
  display: grid;
  grid-template-columns: 548px minmax(0, 1fr) 736px;
`;
const Dock = styled.section`
  display: flex;
  flex-direction: column;
  min-width: 0;
`;
const LayersDock = styled(Dock)`
  flex: 1;
  margin-top: 13px;
`;
const LeftColumn = styled.div`
  display: flex;
  flex-direction: column;
  padding: 0 13px 0 1px;
`;
const DockTitle = styled.div`
  height: 36px;
  flex: none;
  display: grid;
  grid-template-columns: minmax(0, 1fr) 52px;
  align-items: center;
  padding-right: ${(p) => p.$end || 0}px;
  font-size: 22px;
  text-align: center;
  h2 { margin: 0; font: inherit; }
`;
const CloseBox = styled.button`
  width: 22px;
  height: 22px;
  justify-self: end;
  margin-bottom: 4px;
  display: grid;
  place-items: center;
  background: #777;
  border: 2px solid #333;
  border-radius: 5px;
`;
const Close = () => (
  <CloseBox aria-label="Close panel">
    <svg width="14" height="14" viewBox="0 0 14 14" aria-hidden="true"><path d="M2 2L12 12M12 2L2 12" stroke="#333" strokeWidth="3" /></svg>
  </CloseBox>
);
const PanelTools = styled.div`
  position: relative;
  flex: none;
  height: 63px;
  display: flex;
  align-items: center;
  padding: 0 0 2px 3px;
`;
const SmallTool = styled.button`
  flex: none;
  width: 50px;
  height: 50px;
  margin: 0 1px;
  display: grid;
  place-items: center;
  background: none;
  border: 2px solid ${(p) => (p.$on ? "#f0f0f0" : "transparent")};
  border-radius: 6px;
`;
const RedRing = styled.span`
  position: absolute;
  left: -2px;
  top: -9px;
  width: 76px;
  height: 80px;
  border: 6px solid #ff2a00;
  border-radius: 50%;
  pointer-events: none;
  z-index: 2;
`;
const TreeBox = styled.div`
  background: #b1b1b1;
  border: 2px solid #343434;
  border-radius: 4px;
  padding: 1px;
  ${(p) => p.$grow && css`flex: 1;`}
`;
const TreeGrid = styled.div`
  display: grid;
  grid-template: 394px 16px / minmax(0, 1fr) 16px;
`;
const List = styled.ul`
  margin: 0;
  padding: 0;
  list-style: none;
  overflow: hidden;
`;
const BrowserRow = styled.li`
  height: 36px;
  display: flex;
  align-items: center;
  padding-left: ${(p) => 94 + p.$depth * 40}px;
  background: ${(p) => (p.$on ? "#efefef" : "transparent")};
  font-size: 25px;
  font-weight: 500;
  white-space: nowrap;
`;
const Twist = styled.span`
  width: 12px;
  margin-right: 20px;
  flex: none;
`;
const IconSlot = styled.span`
  width: 32px;
  margin-right: 12px;
  flex: none;
  display: grid;
  place-items: center;
`;
const VTrack = styled.div`
  background: #363636;
  padding: 24px 2px 0;
`;
const VThumb = styled.div`
  height: 70px;
  background: #717171;
`;
const HTrack = styled.div`
  background: #363636;
  padding: 2px ${(p) => p.$end} 2px 2px;
  height: 16px;
`;
const HThumb = styled.div`
  height: 12px;
  background: #717171;
`;
const Corner = styled.div`
  border: 2px solid #999;
`;

const BROWSER = [
  [0, "down", "folderOpen", "automating_gis_workflows"],
  [1, "right", "folder", "solution"],
  [1, "right", "qgis", "batch_processing"],
  [1, "right", "zip", "tl_2019_us_mil.zip"],
  [1, "right", "zip", "tl_2019_us_places.zip"],
  [1, "right", "zip", "tl_2019_us_primaryroads."],
  [1, "right", "zip", "tl_2019_us_rails.zip"],
  [1, "down", "zip", "tl_2019_us_state.zip"],
  [2, null, "blobLight", "tl_2019_us_state.shp", true],
  [2, null, "blob", "tl_2019_us_state.shp.e"],
  [2, null, "raster", "tl_2019_us_state.shp.e"],
];

/* ---------- check boxes ---------- */
const CheckWrap = styled.span`
  display: inline-grid;
  flex: none;
  width: ${(p) => p.$size}px;
  height: ${(p) => p.$size}px;
  > * { grid-area: 1 / 1; }
  svg { pointer-events: none; width: 100%; height: 100%; }
`;
const CheckInput = styled.input`
  appearance: none;
  width: 100%;
  height: 100%;
  border: 2px solid #343434;
  border-radius: 7px;
  background: ${(p) => (p.$light ? "#b1b1b1" : "transparent")};
`;
const Check = ({ size = 28, light, ...rest }) => (
  <CheckWrap $size={size}>
    <CheckInput type="checkbox" defaultChecked $light={light} {...rest} />
    <svg viewBox="0 0 28 28" aria-hidden="true"><path d="M5 15L11 21L23 6" fill="none" stroke="#333" strokeWidth="3" strokeLinecap="round" /></svg>
  </CheckWrap>
);
const Swatch = styled.span`
  display: block;
  flex: none;
  width: ${(p) => p.$size}px;
  height: ${(p) => p.$size}px;
  background: ${(p) => p.$c};
  border: 2px solid rgba(35, 35, 35, 0.35);
`;

const LayerRow = styled.li`
  height: 44px;
  display: flex;
  align-items: center;
  padding-left: ${(p) => (p.$on ? 14 : p.$sub ? 86 : 46)}px;
  background: ${(p) => (p.$on ? "#efefef" : "transparent")};
  font-size: 25px;
  font-weight: 500;
  label { display: flex; align-items: center; gap: 12px; }
`;
const LayerName = styled.span`
  font-size: 26px;
  font-weight: 700;
  border-bottom: ${(p) => (p.$u ? "2px solid #0f0f0f" : "0")};
  line-height: 28px;
`;
const RowTwist = styled.span`
  width: 12px;
  margin-right: 20px;
`;
const RowEnd = styled.span`
  margin-left: auto;
  display: flex;
  align-items: center;
  gap: 6px;
  margin-right: 2px;
`;
const ChipBox = styled.span`
  width: 36px;
  height: 36px;
  display: grid;
  place-items: center;
  background: #999;
  border: 2px solid #777;
  border-radius: 5px;
`;
const EndBar = styled.span`
  width: 6px;
  height: 32px;
  background: #8c8c8c;
`;
const CLASSES = [["1", P], ["2", T], ["3", G], ["4", Y], ["5", R], ["", B]];

/* ---------- map ---------- */
const MapPane = styled.section`
  background: #fff;
  border: solid #5c5c5c;
  border-width: 2px 0 1px 2px;
  min-height: 0;
  display: grid;
`;
const MapSvg = styled.svg`
  display: block;
  width: 100%;
  height: 100%;
`;
const WEST = [
  [G, "134,58 394,58 394,184 312,184 280,188 250,195 225,196 200,194 172,201 157,197 152,182 135,177 112,172 102,174 100,150 92,125 85,108 70,98 68,80 90,82 110,89 132,90 138,84 135,74 143,66 135,62"],
  [Y, "102,174 112,172 135,177 152,182 157,197 172,201 200,194 225,196 250,195 280,188 312,184 394,184 414,198 404,216 390,235 386,250 396,257 394,348 90,348 84,325 77,318 88,290 94,275 98,240 101,200"],
  [P, "394,58 433,58 433,98 447,122 470,140 502,157 496,192 505,203 520,198 540,220 562,247 590,242 620,242 638,238 640,348 394,348 396,257 386,250 390,235 404,216 414,198 394,184"],
  [G, "433,58 931,58 931,224 640,224 638,240 626,236 620,242 590,242 562,247 555,236 540,220 528,208 520,198 505,203 496,192 497,172 502,157 480,148 470,140 447,122 433,98"],
  [T, "640,224 931,224 931,389 640,389"],
  [R, "931,58 1213,58 1220,95 1230,118 1232,150 1240,185 931,185"],
  [Y, "931,185 1240,185 1230,200 1245,212 1245,286 1242,322 1220,314 1180,315 1160,307 931,307"],
  [R, "931,307 1160,307 1180,315 1220,314 1242,322 1255,342 1265,360 1270,395 1288,431 1014,431 1014,389 931,389"],
  [Y, "1014,431 1288,431 1306,438 1304,450 1322,467 1322,555 1014,555"],
  [G, "724,389 1014,389 1014,555 724,555"],
  [Y, "517,349 640,349 640,389 724,389 724,555 517,555"],
  [T, "270,349 517,349 517,590 508,594 488,592 490,635 270,473"],
  [G, "90,348 270,349 270,473 490,635 500,655 510,667 499,680 497,700 490,712 497,725 486,733 385,741 378,715 355,696 330,685 298,668 280,663 245,660 238,635 215,610 187,580 185,560 165,545 160,522 145,515 140,500 115,478 108,445 103,432 85,415 95,390 96,368"],
  [P, "517,555 724,555 724,790 640,790 486,742 497,725 490,712 497,700 499,680 510,667 500,655 490,635 488,592 508,594 517,590"],
  [R, "724,555 974,555 972,762 825,762 822,770 760,770 758,790 724,790"],
  [P, "972,557 1322,557 1328,630 1327,693 1300,685 1280,688 1265,684 1250,690 1235,686 1215,688 1195,683 1180,682 1175,675 1150,675 1130,664 1112,662 1098,655 1098,577 972,577"],
  [T, "974,577 1098,577 1098,655 1112,662 1130,664 1150,675 1175,675 1180,682 1195,683 1215,688 1235,686 1250,690 1265,684 1280,688 1300,685 1327,693 1346,698 1346,760 1365,800 1355,858 1320,875 1300,890 1250,912 1225,930 1210,955 1210,980 1218,1005 1216,1014 1205,1018 1195,1010 1170,1007 1140,992 1130,980 1120,965 1118,945 1105,938 1085,910 1065,875 1038,855 1000,852 985,860 975,880 965,887 930,873 912,860 903,835 895,822 860,798 825,768 825,762 972,762"],
  [G, "248,674 298,676 270,686 252,682"],
  [G, "326,700 338,700 342,708 332,710"],
  [G, "325,718 338,726 334,731"],
];
const EAST = [
  [T, "13,58 98,58 98,45 104,42 112,45 118,68 150,74 165,78 185,73 200,75 220,90 230,86 250,97 275,90 285,95 330,100 316,128 288,128 218,155 216,180 202,185 194,195 200,210 197,235 225,250 245,268 257,268 262,286 45,286 45,212 30,200 38,185 32,150 30,118 20,95"],
  [G, "288,128 316,128 299,158 308,168 340,175 385,184 400,192 404,212 412,220 425,207 445,205 465,212 445,240 433,280 434,327 292,327 268,318 262,286 257,268 245,268 225,250 197,235 200,210 194,195 202,185 216,180 218,155"],
  [Y, "330,100 345,96 380,87 525,145 535,160 555,162 560,178 580,180 582,192 622,208 638,280 622,320 598,336 598,350 585,358 430,356 434,327 433,280 445,240 465,212 445,205 425,207 412,220 404,212 400,192 385,184 340,175 308,168 299,158 316,128"],
  [P, "42,286 262,286 268,318 292,327 307,350 300,368 270,378 270,392 255,408 78,408 65,360 42,322"],
  [T, "78,408 250,408 252,432 282,465 304,475 300,505 332,530 345,555 345,572 332,576 325,597 313,593 303,597 303,585 308,577 122,577 122,467 104,450 106,435 88,428"],
  [R, "292,327 434,327 430,358 415,358 415,485 395,520 390,538 372,548 360,544 345,552 332,530 300,505 304,475 282,465 250,425 255,408 270,392 270,378 300,368 307,350"],
  [P, "415,358 528,358 528,482 505,487 480,512 455,514 448,520 430,516 395,520 412,490"],
  [G, "528,358 585,358 598,352 625,361 665,342 705,336 705,400 700,430 688,455 660,465 652,478 636,480 625,495 610,487 580,485 550,480 540,470 528,468"],
  [Y, "345,572 350,550 372,548 390,535 395,522 430,516 448,520 455,514 480,512 505,487 528,482 528,468 540,470 550,480 580,485 610,487 620,495 622,512 640,537 600,562 575,571 396,571 390,576"],
  [P, "330,577 390,577 396,571 658,574 640,592 600,605 560,625 548,637 305,637 315,615"],
  [P, "704,420 705,441 748,441 748,462 762,453 775,460 800,448 820,455 818,465 795,458 790,475 760,492 742,495 715,530 705,536 655,545 640,530 622,512 622,495 636,480 652,478 660,462 688,457"],
  [R, "575,571 600,562 640,537 655,545 705,536 715,530 742,495 760,492 790,475 795,458 818,465 830,465 850,480 840,497 880,515 925,515 898,555 900,573"],
  [G, "748,443 903,443 905,494 932,496 930,508 915,514 880,515 858,500 840,497 852,480 830,465 818,455 805,444 790,450 772,447 748,462"],
  [R, "903,443 914,438 915,455 922,470 932,480 934,494 905,494"],
  [T, "705,336 737,328 737,348 920,348 930,365 942,375 930,385 928,402 942,425 928,436 912,441 705,441"],
  [Y, "942,375 978,388 970,405 980,412 975,445 955,465 935,480 918,462 914,442 942,425 928,402 930,385"],
  [G, "762,287 780,280 858,278 870,264 898,245 935,224 1002,224 1002,260 1006,290 1000,345 992,388 1020,386 1065,375 1066,388 1015,405 968,409 978,388 942,375 935,362 920,348 737,348 737,328 770,315 772,305"],
  [P, "1002,224 1078,224 1076,240 1055,255 1050,280 1037,316 1006,316 1006,290 1000,262"],
  [T, "1078,224 1085,212 1098,215 1100,290 1112,308 1105,316 1037,316 1050,280 1055,255 1076,240"],
  [Y, "1098,213 1112,205 1128,188 1130,170 1140,150 1173,122 1182,132 1213,126 1233,138 1234,195 1248,205 1250,215 1262,222 1268,232 1220,255 1190,275 1150,280 1130,288 1112,308 1102,292"],
  [R, "1006,317 1095,317 1105,313 1118,322 1112,342 1138,342 1147,355 1142,368 1122,366 1144,380 1125,378 1110,378 1090,355 1080,348 1000,347"],
  [P, "998,348 1066,348 1066,376 1020,386 992,390"],
  [T, "1066,348 1080,348 1092,371 1066,377"],
  [T, "658,574 900,573 916,605 915,630 895,640 875,655 850,653 830,665 815,687 785,687 742,647 695,645 685,631 635,630 595,640 548,637 560,625 600,605 640,592"],
  [G, "590,642 635,630 685,631 697,643 742,647 785,685 768,702 762,716 720,742 692,760 680,740 655,705 620,675 600,655"],
  [Y, "497,640 590,640 600,655 620,675 655,705 680,740 692,762 672,795 670,815 645,812 640,828 522,815 516,790 520,750"],
  [R, "390,640 497,640 520,750 516,790 522,804 413,804 418,835 380,838 377,770"],
  [Y, "300,640 390,640 377,770 380,838 332,838 322,803 246,803 265,770 270,745 265,715 270,690 290,660"],
  [R, "146,720 265,720 270,745 265,770 246,803 322,803 332,838 365,840 362,860 348,868 355,885 335,890 325,880 280,887 255,873 225,867 195,860 155,858 160,830 165,800 146,760"],
  [G, "122,577 308,577 303,585 303,597 313,593 325,597 305,637 290,660 270,690 265,720 146,720 146,698 127,693 128,630"],
  [P, "413,804 520,804 525,816 640,828 645,812 668,817 672,840 685,870 707,905 715,940 728,975 724,1035 708,1052 688,1060 675,1030 655,1018 645,995 632,985 607,935 612,900 600,882 585,860 562,845 530,860 505,860 480,838 450,832 418,835"],
  [P, "638,1068 665,1058 690,1062 650,1077"],
  [P, "1254,1322 1262,1318 1300,1320 1340,1328 1335,1338 1300,1348 1256,1346"],
  [P, "1345,1324 1360,1328 1352,1334"],
  [P, "1350,1350 1366,1350 1364,1357 1351,1357"],
];
const States = ({ data }) => data.map(([c, pts], i) => <polygon key={i} points={pts} fill={c} />);
const UsMap = () => (
  <MapSvg viewBox="-144 -1104 2760 3324" role="img" aria-label="Map of the states, coloured by class">
    <g stroke="#232323" strokeWidth="4" strokeLinejoin="round">
      <States data={WEST} />
      <g transform="translate(1200 0)"><States data={EAST} /></g>
    </g>
    <g fill="#232323">
      {[[143, 524], [289, 711], [309, 701], [1806, 1067], [2275, 382], [2427, 1338], [2445, 1327]].map(([x, y]) => <circle key={x} cx={x} cy={y} r="6" />)}
    </g>
  </MapSvg>
);

/* ---------- right panel ---------- */
const RightDock = styled(Dock)`
  padding: 0 6px 0 20px;
`;
const Combo = styled.div`
  display: flex;
  align-items: center;
  height: ${(p) => p.$h || 48}px;
  width: ${(p) => (p.$w ? p.$w + "px" : "auto")};
  padding: 0 10px 0 ${(p) => p.$pad || 8}px;
  gap: ${(p) => p.$gap || 12}px;
  background: linear-gradient(#545454, #393939);
  border: 2px solid #222;
  border-radius: 6px;
  color: #b5b5b5;
  ${(p) => p.$cut && css`border-right: 0; border-top-right-radius: 0; border-bottom-right-radius: 0;`}
`;
const ComboTop = styled(Combo)`
  margin-top: 6px;
`;
const Select = styled.select`
  flex: 1;
  min-width: 0;
  height: 100%;
  padding-top: 1px;
  appearance: none;
  background: none;
  border: 0;
  color: inherit;
  font-size: ${(p) => p.$fs || 25}px;
`;
const TypeHint = styled.span`
  width: 34px;
  color: #5e5e5e;
  font-size: 18px;
`;
const StyleBody = styled.div`
  flex: 1;
  margin: 12px 0 5px;
  display: grid;
  grid-template-columns: 76px minmax(0, 1fr);
  gap: 6px;
`;
const SideTabs = styled.nav`
  background: #363636;
  border-radius: 4px;
  padding: 4px 4px;
`;
const SideTab = styled.button`
  width: 100%;
  height: 60px;
  padding-right: ${(p) => (p.$on ? 2 : 8)}px;
  display: grid;
  place-items: center;
  border: 0;
  background: ${(p) => (p.$on ? "#efefef" : "none")};
`;
const StyleCol = styled.div`
  display: flex;
  flex-direction: column;
  font-size: 25px;
`;
const Marked = styled.div`
  position: relative;
`;
const RedBox = styled.span`
  position: absolute;
  inset: ${(p) => p.$inset};
  border: 6px solid #ff2a00;
  border-radius: 2px;
  pointer-events: none;
  z-index: 2;
`;
const FormRow = styled.div`
  display: grid;
  grid-template-columns: 148px minmax(0, 1fr);
  align-items: center;
  margin-top: 12px;
`;
const SymbolRow = styled(FormRow)`
  margin-top: 6px;
  label { padding-top: 7px; }
`;
const FieldLine = styled.div`
  display: grid;
  grid-template-columns: minmax(0, 1fr) 22px;
  gap: 12px;
`;
const Btn = styled.button`
  height: ${(p) => p.$h || 48}px;
  width: ${(p) => (p.$w ? p.$w + "px" : "auto")};
  flex: none;
  display: grid;
  place-items: center;
  overflow: hidden;
  background: linear-gradient(#a2a2a2, #868686);
  border: 2px solid #343434;
  border-radius: 6px;
  font-size: 25px;
  white-space: nowrap;
  ${(p) => p.$dark && css`background: linear-gradient(#545454, #393939); color: #b5b5b5; font-weight: 500;`}
  ${(p) => p.$cut && css`border-right: 0; border-top-right-radius: 0; border-bottom-right-radius: 0;`}
`;
const EpsBtn = styled(Btn)`
  justify-items: start;
  padding-left: 6px;
`;
const AdvancedBtn = styled(Btn)`
  padding: 0 4px 0 7px;
`;
const SymbolBtn = styled(Btn)`
  padding: 6px 2px 0 4px;
`;
const Strip = styled.span`
  display: block;
  width: 100%;
  height: 20px;
  background: #a57154;
  border: 2px solid #84583f;
`;
const TableBox = styled.div`
  flex: 1;
  margin-top: 12px;
  padding: 4px 0 0 4px;
  background: #b1b1b1;
  border: 2px solid #343434;
  border-right: 0;
  border-top-left-radius: 4px;
`;
const Table = styled.table`
  width: 100%;
  table-layout: fixed;
  border-collapse: collapse;
  text-align: left;
  th {
    height: 43px;
    padding: 0 0 4px 6px;
    font-size: 22px;
    font-weight: 400;
    background: #717171;
    border-bottom: 2px solid #343434;
  }
  th + th { border-left: 2px solid #343434; }
  td { height: 52px; padding: 4px 0 0 10px; vertical-align: top; line-height: 36px; }
`;
const HeadSort = styled.span`
  display: flex;
  align-items: center;
  svg { margin: 8px 0 0 -6px; }
`;
const SymCell = styled.span`
  display: flex;
  align-items: center;
  gap: 22px;
  margin: 6px 0 0 -2px;
`;
const NoWrapEm = styled.em`
  white-space: nowrap;
`;
const ButtonRow = styled.div`
  display: flex;
  gap: 12px;
  margin-top: 12px;
`;
const Push = styled.span`
  margin-left: auto;
`;
const Group = styled.button`
  display: flex;
  align-items: center;
  gap: 20px;
  height: 56px;
  padding: 4px 0 0 8px;
  background: none;
  border: 0;
  font-size: 26px;
  font-weight: 700;
`;
const BottomRow = styled.div`
  display: flex;
  align-items: flex-start;
  gap: 12px;
  margin-top: 12px;
`;
const CheckLabel = styled.label`
  display: flex;
  align-items: center;
  gap: 14px;
  height: 50px;
  margin-right: ${(p) => p.$end || 0}px;
`;

/* ---------- status bar ---------- */
const Status = styled.footer`
  height: 60px;
  flex: none;
  display: flex;
  align-items: center;
  padding: 2px 32px 0 8px;
  font-size: 22px;
  white-space: nowrap;
`;
const Locator = styled.label`
  width: 434px;
  height: 48px;
  flex: none;
  display: flex;
  align-items: center;
  gap: 18px;
  padding: 0 16px;
  background: #b1b1b1;
  border: 2px solid #343434;
  border-radius: 6px;
  font-size: 25px;
  input { flex: 1; min-width: 0; border: 0; background: none; }
  input::placeholder { color: #666; opacity: 1; }
`;
const Count = styled.span`
  width: 58px;
  text-align: center;
  color: #999;
`;
const StatusLabel = styled.label`
  width: ${(p) => p.$w}px;
  flex: none;
`;
const CoordInput = styled.input`
  width: 162px;
  height: 44px;
  text-align: center;
  background: #b1b1b1;
  border: 2px solid #343434;
  border-radius: 6px;
`;
const Slot = styled.span`
  width: ${(p) => p.$w}px;
  margin-right: ${(p) => p.$end || 0}px;
  flex: none;
  display: grid;
  place-items: center;
`;
const SpinInput = styled.input`
  flex: 1;
  min-width: 0;
  background: none;
  border: 0;
  color: inherit;
`;
const SpinArrows = styled.span`
  display: grid;
  gap: 12px;
`;
const EpsgBtn = styled.button`
  display: flex;
  align-items: center;
  gap: 6px;
  background: none;
  border: 0;
`;
const BubbleBtn = styled.button`
  margin-left: auto;
  background: none;
  border: 0;
`;

const Defs = styled.svg`
  position: absolute;
  width: 0;
  height: 0;
`;

export default function App() {
  return (
    <Page>
      <Global />
      <Defs aria-hidden="true">
        <defs>
          <linearGradient id="lens" x1="0" y1="0" x2="1" y2="0.3"><stop offset="0" stopColor="#efefef" /><stop offset=".5" stopColor="#e2e2e2" /><stop offset=".55" stopColor="#cfcfcf" /><stop offset="1" stopColor="#c6c6c6" /></linearGradient>
          <linearGradient id="tagY" x1="0" y1="0" x2="1" y2="1"><stop offset="0" stopColor="#fbf48c" /><stop offset="1" stopColor="#edd400" /></linearGradient>
          <linearGradient id="blobF" x1="0" y1="0" x2="1" y2="1"><stop offset="0" stopColor="#f2f5f8" /><stop offset="1" stopColor="#8fb4de" /></linearGradient>
          <linearGradient id="swirl" x1="0" y1="0" x2="1" y2="1"><stop offset="0" stopColor="#a4c6ea" /><stop offset="1" stopColor="#3a76bd" /></linearGradient>
        </defs>
      </Defs>
      <Window>
        <TitleBar>
          <Lights><Light aria-label="Close" /><Light aria-label="Minimize" /><Light aria-label="Zoom" /></Lights>
          <span>*Untitled Project - QGIS</span>
        </TitleBar>
        <SubTitle>*Untitled Project - QGIS</SubTitle>
        <Toolbar>{renderTools(ROW1)}<More aria-label="More tools">›</More></Toolbar>
        <Toolbar>{renderTools(ROW2)}</Toolbar>

        <Main>
          <LeftColumn>
            <Dock>
              <DockTitle $end={4}><h2>Browser</h2><Close /></DockTitle>
              <PanelTools>
                {["addLayer", "refresh", "filter", "collapse", "info"].map((n) => (
                  <SmallTool key={n} aria-label={n}><Icon name={n} size={30} /></SmallTool>
                ))}
              </PanelTools>
              <TreeBox>
                <TreeGrid>
                  <List>
                    {BROWSER.map(([depth, tw, icon, text, on], i) => (
                      <BrowserRow key={i} $depth={depth} $on={on}>
                        <Twist>{tw && <Caret dir={tw} color="#717171" />}</Twist>
                        <IconSlot><Icon name={icon} size={icon.startsWith("blob") ? 32 : 30} /></IconSlot>
                        {text}
                      </BrowserRow>
                    ))}
                  </List>
                  <VTrack><VThumb /></VTrack>
                  <HTrack $end="116px"><HThumb /></HTrack>
                  <Corner />
                </TreeGrid>
              </TreeBox>
            </Dock>
            <LayersDock>
              <DockTitle $end={4}><h2>Layers</h2><Close /></DockTitle>
              <PanelTools>
                <RedRing />
                <SmallTool $on aria-label="Layer styling"><Icon name="brush" size={28} /></SmallTool>
                <SmallTool aria-label="Add group"><Icon name="addGroup" size={30} /></SmallTool>
                <SmallTool aria-label="Visibility"><Icon name="eye" size={32} /></SmallTool>
                <SmallTool aria-label="Filter"><Icon name="filter" size={30} /></SmallTool>
                <SmallTool aria-label="Filter by expression"><Icon name="filterExpr" size={30} /></SmallTool>
                <DropButton aria-label="Filter options"><Caret size={8} /></DropButton>
                <SmallTool aria-label="Expand all"><Icon name="expand" size={30} /></SmallTool>
                <SmallTool aria-label="Collapse all"><Icon name="collapse" size={30} /></SmallTool>
                <SmallTool aria-label="Remove layer"><Icon name="removeLayer" size={30} /></SmallTool>
              </PanelTools>
              <TreeBox $grow>
                <List>
                  <LayerRow $on>
                    <RowTwist><Caret color="#717171" /></RowTwist>
                    <label><Check light /><Icon name="blobGray" size={32} /><LayerName $u>Colored</LayerName></label>
                    <RowEnd><ChipBox><Icon name="chip" size={26} /></ChipBox><EndBar /></RowEnd>
                  </LayerRow>
                  {CLASSES.map(([t, c]) => (
                    <LayerRow key={c} $sub><label><Check aria-label={t ? undefined : "Other values"} /><Swatch $c={c} $size={36} />{t}</label></LayerRow>
                  ))}
                  <LayerRow>
                    <label><Check /><Swatch $c="#c43c39" $size={32} /><LayerName>tl_2019_us_state</LayerName></label>
                    <RowEnd><EndBar /></RowEnd>
                  </LayerRow>
                </List>
              </TreeBox>
            </LayersDock>
          </LeftColumn>

          <MapPane><UsMap /></MapPane>

          <RightDock>
            <DockTitle><h2>Layer Styling</h2><Close /></DockTitle>
            <ComboTop $gap={11} $pad={7}>
              <Icon name="blobWhite" size={32} />
              <Select aria-label="Layer"><option>Colored</option></Select>
              <Caret size={9} />
            </ComboTop>
            <StyleBody>
              <SideTabs>
                {["brushFaded", "tagYellow", "cube", "brushes", "history"].map((n, i) => (
                  <SideTab key={n} $on={i === 0} aria-label={n}><Icon name={n} size={n === "tagYellow" ? 40 : 44} /></SideTab>
                ))}
              </SideTabs>
              <StyleCol>
                <Marked>
                  <Combo $cut $gap={12} $pad={8}>
                    <Icon name="categorized" size={30} />
                    <Select aria-label="Renderer"><option>Categorized</option></Select>
                  </Combo>
                  <FormRow>
                    <label htmlFor="value">Value</label>
                    <FieldLine>
                      <Combo $h={50} $gap={8}>
                        <TypeHint>123</TypeHint>
                        <Select id="value"><option>color_id</option></Select>
                        <Caret size={9} />
                      </Combo>
                      <EpsBtn $h={50} $cut aria-label="Expression"><Icon name="eps" size={30} /></EpsBtn>
                    </FieldLine>
                  </FormRow>
                  <RedBox $inset="-12px -9px -14px -14px" />
                </Marked>
                <SymbolRow>
                  <label htmlFor="symbol">Symbol</label>
                  <SymbolBtn id="symbol" $dark $cut $h={50}><Strip /></SymbolBtn>
                </SymbolRow>
                <FormRow>
                  <label htmlFor="ramp">Color ramp</label>
                  <Btn id="ramp" $dark $cut $h={56}>Random colors</Btn>
                </FormRow>
                <TableBox>
                  <Table>
                    <colgroup><col width="105" /><col width="84" /><col /></colgroup>
                    <thead>
                      <tr><th><HeadSort>Symbol<Caret color="#b5b5b5" /></HeadSort></th><th>Value</th><th>Legend</th></tr>
                    </thead>
                    <tbody>
                      {CLASSES.map(([t, c]) => (
                        <tr key={c}>
                          <td><SymCell><Check size={36} aria-label={t || "all other values"} /><Swatch $c={c} $size={32} /></SymCell></td>
                          <td>{t || <NoWrapEm>all ...</NoWrapEm>}</td>
                          <td>{t}</td>
                        </tr>
                      ))}
                    </tbody>
                  </Table>
                </TableBox>
                <ButtonRow>
                  <Marked>
                    <Btn $w={112}>Classify</Btn>
                    <RedBox $inset="-14px -14px -10px -10px" />
                  </Marked>
                  <Btn $w={56} aria-label="Add"><Icon name="plus" size={28} /></Btn>
                  <Btn $w={56} aria-label="Remove"><Icon name="minus" size={28} /></Btn>
                  <Btn $w={132}>Delete All</Btn>
                  <Push />
                  <AdvancedBtn $cut>Advanced</AdvancedBtn>
                </ButtonRow>
                <Group>
                  <svg width="16" height="24" viewBox="0 0 16 24" aria-hidden="true"><path d="M2 2L14 12L2 22Z" fill="#555" stroke="#222" strokeWidth="2" /></svg>
                  Layer Rendering
                </Group>
                <HTrack $end="30px"><HThumb /></HTrack>
                <BottomRow>
                  <Btn $w={50} $h={50} aria-label="Undo"><Icon name="undo" size={26} /></Btn>
                  <Btn $w={50} $h={50} aria-label="Redo"><Icon name="redo" size={26} /></Btn>
                  <Push />
                  <CheckLabel $end={4}><Check size={26} light />Live update</CheckLabel>
                  <Btn $w={86}>Apply</Btn>
                </BottomRow>
              </StyleCol>
            </StyleBody>
          </RightDock>
        </Main>

        <Status>
          <Locator><Icon name="search" size={26} /><input placeholder="Type to locate (⌘K)" aria-label="Type to locate" /></Locator>
          <Count>4</Count>
          <StatusLabel $w={120} htmlFor="coord">Coordinate</StatusLabel>
          <CoordInput id="coord" defaultValue="-129.8,32.3" />
          <Slot $w={48} $end={19}><Icon name="mouse" size={32} /></Slot>
          <StatusLabel $w={63} htmlFor="scale">Scale</StatusLabel>
          <Combo $w={206} $pad={6}><Select id="scale" $fs={22}><option>1:53718466</option></Select><Caret size={9} /></Combo>
          <Slot $w={66}><Icon name="lock" size={28} /></Slot>
          <StatusLabel $w={104} htmlFor="mag">Magnifier</StatusLabel>
          <Combo $w={192} $h={50} $pad={8}><SpinInput id="mag" defaultValue="100%" /><SpinArrows><Caret size={9} dir="up" /><Caret size={9} /></SpinArrows></Combo>
          <Slot $w={16} />
          <StatusLabel $w={106} htmlFor="rot">Rotation</StatusLabel>
          <Combo $w={184} $pad={8}><SpinInput id="rot" defaultValue="0.0 °" /><SpinArrows><Caret size={9} dir="up" /><Caret size={9} /></SpinArrows></Combo>
          <Slot $w={14} />
          <CheckLabel><Check size={26} light />Render</CheckLabel>
          <Slot $w={28} />
          <EpsgBtn><Icon name="globe" size={28} />EPSG:4269</EpsgBtn>
          <BubbleBtn aria-label="Messages"><Icon name="bubble" size={32} /></BubbleBtn>
        </Status>
      </Window>
    </Page>
  );
}
